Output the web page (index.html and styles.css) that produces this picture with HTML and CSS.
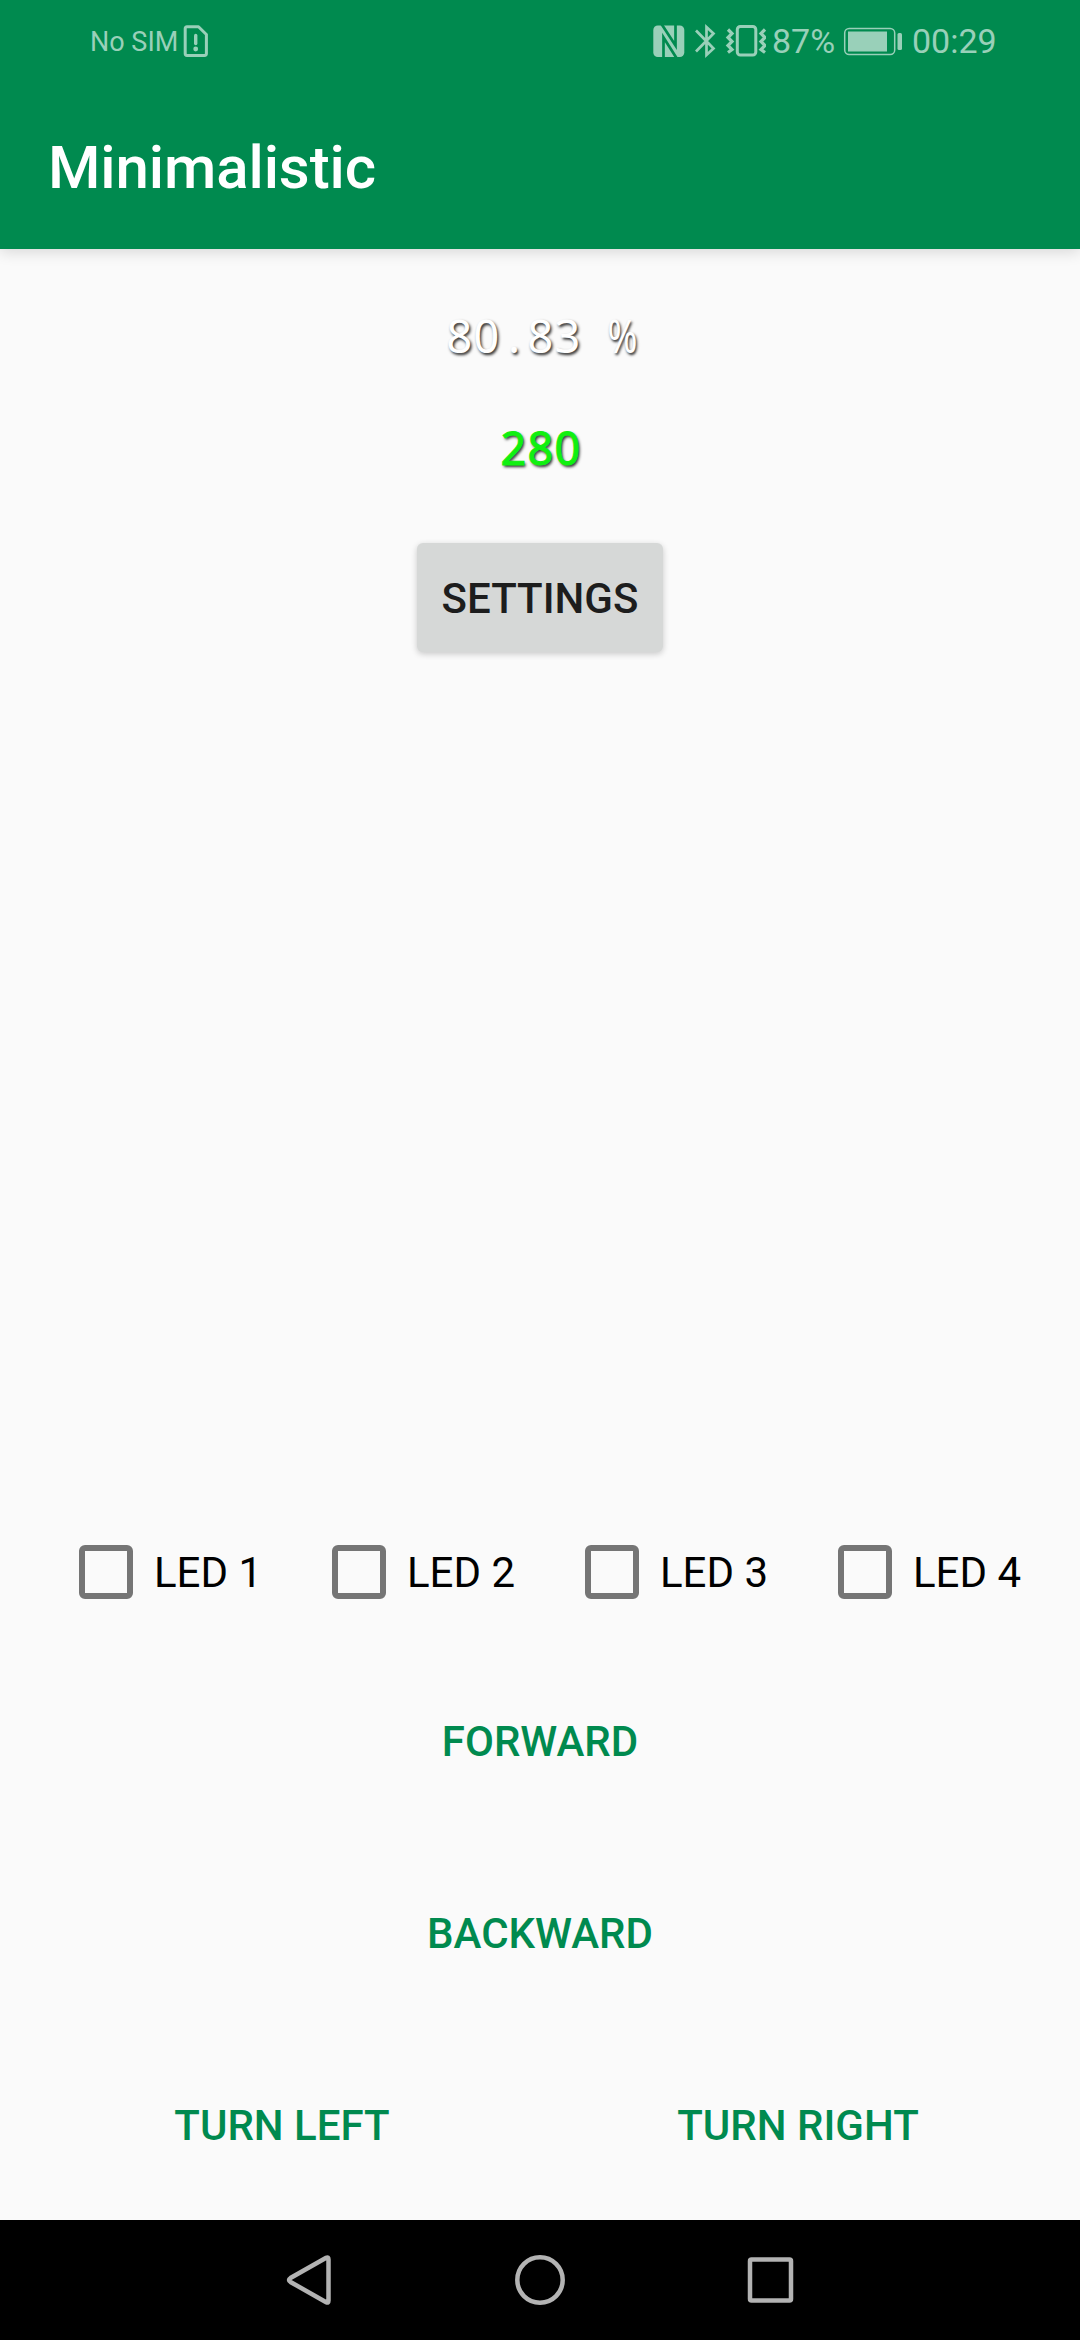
FILE: index.html
```html
<!DOCTYPE html>
<html lang="en">
<head>
<meta charset="utf-8">
<title>Minimalistic</title>
<link rel="stylesheet" href="styles.css">
</head>
<body>
<div class="screen">
  <header class="app-header">
    <div class="status-bar">
      <span class="carrier">No SIM</span>
      <svg class="sim" width="26" height="34" viewBox="0 0 26 34" fill="none" stroke="currentColor"><path d="M4 2.7H15.5L23.4 10.5V29.5Q23.4 31.4 21.5 31.4H4Q2.2 31.4 2.2 29.5V4.6Q2.2 2.7 4 2.7Z" stroke-width="3" stroke-linejoin="round"/><path d="M12.7 11.5V19.5" stroke-width="3.4" stroke-linecap="round"/><circle cx="12.7" cy="25" r="2.4" fill="currentColor" stroke="none"/></svg>
      <svg class="tray" width="116" height="40" viewBox="650 20 116 40" fill="none" stroke="currentColor">
        <rect x="653.300" y="24.500" width="31" height="31.500" rx="4.500" fill="currentColor" stroke="none"/>
        <path class="nfc-gap" d="M663.500 57V36.500L676.500 57M661.500 23L675.500 44.500V23" stroke-width="2.700"/>
        <path d="M696 29.500L713.500 47.500L706.500 54V26L713.500 32.500L696 50.500" stroke-width="2.700"/>
        <rect x="737.300" y="25.500" width="18.500" height="28.500" rx="3" stroke-width="3"/>
        <path d="M728 28.500l4 4-4 4 4 4-4 4 4 4-4 3" stroke-width="3.200"/>
        <path d="M765 28.500l-4 4 4 4-4 4 4 4-4 4 4 3" stroke-width="3.200"/>
      </svg>
      <span class="percent">87%</span>
      <svg class="battery" width="60" height="30" viewBox="843 25 60 30"><rect x="844.700" y="27.500" width="50" height="26" rx="4.500" fill="none" stroke="currentColor" stroke-width="1.500"/><rect x="848" y="30.500" width="39" height="20" fill="currentColor"/><rect x="897.500" y="32" width="4.500" height="17" rx="1.500" fill="currentColor"/></svg>
      <span class="clock">00:29</span>
    </div>
    <h1 class="title">Minimalistic</h1>
  </header>
  <main class="content">
    <div class="readout">80<span class="cell">.</span>83<span class="cell"> </span><span class="cell pct">%</span></div>
    <div class="readout value">280</div>
    <button class="settings">SETTINGS</button>
    <div class="leds">
      <label class="led"><span class="box"></span>LED 1</label>
      <label class="led"><span class="box"></span>LED 2</label>
      <label class="led"><span class="box"></span>LED 3</label>
      <label class="led"><span class="box"></span>LED 4</label>
    </div>
    <div class="actions">
      <button class="action">FORWARD</button>
      <button class="action">BACKWARD</button>
      <div class="turns">
        <button class="action">TURN LEFT</button>
        <button class="action">TURN RIGHT</button>
      </div>
    </div>
  </main>
  <nav class="nav-bar">
    <svg width="60" height="60" viewBox="0 0 60 60"><path d="M47.200 7.800Q49.500 6.500 49.500 9.500V50.500Q49.500 53.500 47.200 52.200L11.500 32Q8.500 30 11.500 28Z"/></svg>
    <svg width="60" height="60" viewBox="0 0 60 60"><circle cx="30" cy="30" r="22.700"/></svg>
    <svg width="60" height="60" viewBox="0 0 60 60"><rect x="9" y="9.500" width="41" height="41" rx="1.500"/></svg>
  </nav>
</div>
</body>
</html>
```

FILE: styles.css
```css
* { box-sizing: border-box; }
body {
  margin: 0;
  font-family: Roboto, "Liberation Sans", sans-serif;
}
.screen {
  width: 1080px;
  height: 2340px;
  display: flex;
  flex-direction: column;
  background: #fafafa;
}
.app-header {
  height: 249px;
  background: #008a4f;
  box-shadow: 0 3px 14px rgba(0, 0, 0, 0.14);
}
.status-bar {
  height: 81px;
  padding-left: 90px;
  display: flex;
  align-items: center;
  color: #99d0b9;
}
.status-bar svg { flex: none; }
.nfc-gap { stroke: #008a4f; }
.carrier {
  width: 93px;
  font-size: 27px;
  white-space: nowrap;
  padding-top: 2px;
}
.tray { margin-left: 441px; }
.percent {
  width: 71px;
  margin-left: 6px;
  font-size: 34px;
}
.clock {
  margin-left: 9px;
  font-size: 34px;
}
.title {
  margin: 0;
  padding: 52px 0 0 48px;
  color: #fff;
  font-size: 60px;
  font-weight: 500;
  line-height: 70px;
  letter-spacing: -0.1px;
}
.content {
  flex: 1;
  display: flex;
  flex-direction: column;
  align-items: center;
}
.readout {
  height: 60px;
  margin-top: 57px;
  padding-left: 2px;
  display: flex;
  font-family: "Noto Sans", sans-serif;
  font-size: 45px;
  line-height: 60px;
  letter-spacing: 1.26px;
  color: #fff;
  text-shadow: 1.5px 1.5px 3px rgba(0, 0, 0, 0.85);
}
.cell {
  width: 27px;
  text-align: center;
  letter-spacing: 0;
}
.pct {
  display: flex;
  justify-content: center;
  transform: scaleX(0.8);
}
.value {
  margin-top: 52px;
  color: #10f010;
  -webkit-text-stroke: 1px #10f010;
}
button {
  border: 0;
  padding: 0;
  font-family: inherit;
  font-size: 42px;
  font-weight: 500;
}
.settings {
  width: 246px;
  height: 109px;
  margin-top: 65px;
  padding-top: 2px;
  border-radius: 6px;
  background: #d6d8d7;
  color: #1d1d1d;
  box-shadow: 0 2px 6px rgba(0, 0, 0, 0.2);
}
.leds {
  align-self: stretch;
  height: 54px;
  margin-top: auto;
  padding-left: 79px;
  display: grid;
  grid-template-columns: repeat(4, 253px);
}
.led {
  display: flex;
  align-items: flex-start;
  gap: 21px;
  font-size: 42px;
  line-height: 56px;
  white-space: nowrap;
  color: #000;
}
.box {
  width: 54px;
  height: 54px;
  border: 6px solid #757575;
  border-radius: 6px;
}
.actions {
  width: 1032px;
  margin: 70px 0 23px;
  display: grid;
  gap: 48px;
}
.action {
  height: 144px;
  background: none;
  color: #008a4f;
}
.turns {
  display: grid;
  grid-template-columns: 1fr 1fr;
}
.nav-bar {
  height: 120px;
  padding: 0 279px;
  display: flex;
  align-items: center;
  justify-content: space-between;
  background: #000;
}
.nav-bar svg {
  fill: none;
  stroke: #b3b3b3;
  stroke-width: 4.5;
}
```
